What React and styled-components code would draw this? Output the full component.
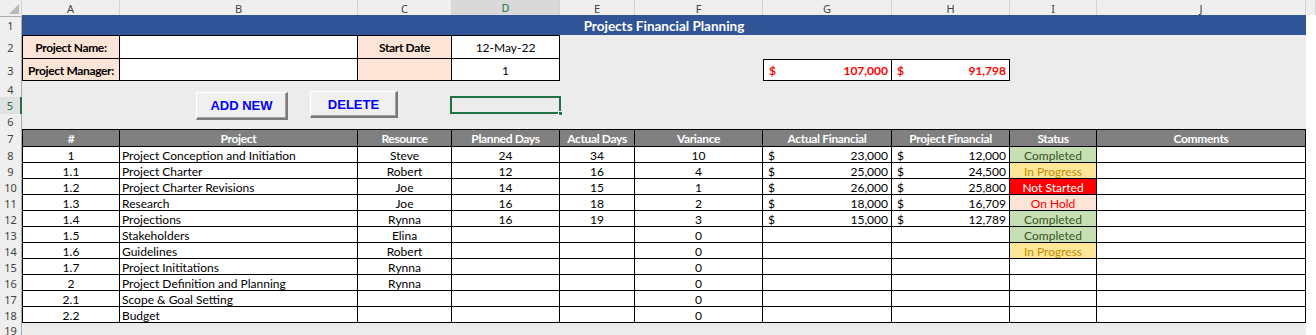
import React from 'react'
import styled, { createGlobalStyle, css } from 'styled-components'

const GlobalStyle = createGlobalStyle`
  html, body {
    margin: 0;
    padding: 0;
    background: #ffffff;
  }
  body {
    font-family: Lato, "Open Sans", sans-serif;
    overflow: hidden;
  }
`

const COLS = ['A', 'B', 'C', 'D', 'E', 'F', 'G', 'H', 'I', 'J']

const rows = [
  ['1', 'Project Conception and Initiation', 'Steve', '24', '34', '10', '23,000', '12,000', 'Completed'],
  ['1.1', 'Project Charter', 'Robert', '12', '16', '4', '25,000', '24,500', 'In Progress'],
  ['1.2', 'Project Charter Revisions', 'Joe', '14', '15', '1', '26,000', '25,800', 'Not Started'],
  ['1.3', 'Research', 'Joe', '16', '18', '2', '18,000', '16,709', 'On Hold'],
  ['1.4', 'Projections', 'Rynna', '16', '19', '3', '15,000', '12,789', 'Completed'],
  ['1.5', 'Stakeholders', 'Elina', '', '', '0', '', '', 'Completed'],
  ['1.6', 'Guidelines', 'Robert', '', '', '0', '', '', 'In Progress'],
  ['1.7', 'Project Inititations', 'Rynna', '', '', '0', '', '', ''],
  ['2', 'Project Definition and Planning', 'Rynna', '', '', '0', '', '', ''],
  ['2.1', 'Scope & Goal Setting', '', '', '', '0', '', '', ''],
  ['2.2', 'Budget', '', '', '', '0', '', '', ''],
]

const statusStyles = {
  'Completed': { bg: '#c6e0b4', color: '#375623' },
  'In Progress': { bg: '#ffe699', color: '#bf8f00' },
  'Not Started': { bg: '#ff0000', color: '#ffffff' },
  'On Hold': { bg: '#fce4d6', color: '#ff0000' },
}

const App = () => {
  return (
    <>
      <GlobalStyle />
      <Sheet>
        <Row $h={15}>
          <Corner />
          {COLS.map(c => (
            <ColHead key={c} $active={c === 'D'}>{c}</ColHead>
          ))}
          <ColHead />
        </Row>

        <Row $h={20}>
          <RowHead>1</RowHead>
          <Title $span={10}>Projects Financial Planning</Title>
          <Outside />
        </Row>

        <Row $h={24}>
          <RowHead>2</RowHead>
          <Cell $box $left $top $bg='#fce4d6' $bold>Project Name:</Cell>
          <Cell $box $top $bg='#fff' />
          <Cell $box $top $bg='#fce4d6' $bold>Start Date</Cell>
          <Cell $box $top $bg='#fff'>12-May-22</Cell>
          <Cell $span={6} />
          <Outside />
        </Row>

        <Row $h={22}>
          <RowHead>3</RowHead>
          <Cell $box $left $bg='#fce4d6' $bold>Project Manager:</Cell>
          <Cell $box $bg='#fff' />
          <Cell $box $bg='#fce4d6' />
          <Cell $box $bg='#fff'>1</Cell>
          <Cell $span={2} />
          <Money $box $left $top $red><span>$</span><span>107,000</span></Money>
          <Money $box $top $red><span>$</span><span>91,798</span></Money>
          <Cell $span={2} />
          <Outside />
        </Row>

        <Row $h={16}>
          <RowHead>4</RowHead>
          <Cell $span={10} />
          <Outside />
        </Row>

        <Row $h={17}>
          <RowHead $active>5</RowHead>
          <Cell $span={3} />
          <Selected />
          <Cell $span={6} />
          <Outside />
        </Row>

        <Row $h={15}>
          <RowHead>6</RowHead>
          <Cell $span={10} />
          <Outside />
        </Row>

        <Row $h={18}>
          <RowHead>7</RowHead>
          {['#', 'Project', 'Resource', 'Planned Days', 'Actual Days', 'Variance', 'Actual Financial', 'Project Financial', 'Status', 'Comments'].map((h, i) => (
            <HeadCell key={h} $box $top $left={i === 0} $bold>{h}</HeadCell>
          ))}
          <Outside />
        </Row>

        {rows.map((r, i) => {
          const st = statusStyles[r[8]]
          return (
            <Row $h={16} key={i}>
              <RowHead>{8 + i}</RowHead>
              <Cell $box $left $bg='#fff'>{r[0]}</Cell>
              <Cell $box $bg='#fff' $align='left'>{r[1]}</Cell>
              <Cell $box $bg='#fff'>{r[2]}</Cell>
              <Cell $box $bg='#fff'>{r[3]}</Cell>
              <Cell $box $bg='#fff'>{r[4]}</Cell>
              <Cell $box $bg='#fff'>{r[5]}</Cell>
              <Money $box>{r[6] && <><span>$</span><span>{r[6]}</span></>}</Money>
              <Money $box>{r[7] && <><span>$</span><span>{r[7]}</span></>}</Money>
              <Cell $box $bg={st ? st.bg : '#fff'} $color={st && st.color}>{r[8]}</Cell>
              <Cell $box $bg='#fff' />
              <Outside />
            </Row>
          )
        })}

        <Row $h={12}>
          <RowHead>19</RowHead>
          <Cell $span={10} />
          <Outside />
        </Row>

        <FormButton $left={196} $top={92} $w={92} $h={28}>ADD NEW</FormButton>
        <FormButton $left={310} $top={91} $w={88} $h={27}>DELETE</FormButton>
      </Sheet>
    </>
  )
}

const Sheet = styled.div`
  position: relative;
  display: grid;
  grid-template-columns: 22px 98px 238px 94px 108px 75px 128px 129px 118px 87px 209px 1fr;
  width: 1316px;
  height: 335px;
  overflow: hidden;
  background: #ececec;
`

const Row = styled.div`
  grid-column: 1 / -1;
  display: grid;
  grid-template-columns: subgrid;
  height: ${p => p.$h}px;
`

const Corner = styled.div`
  position: relative;
  background: #efefef;
  border-right: 1px solid #d4d4d4;
  border-bottom: 1px solid #ababab;
  box-sizing: border-box;
  &::after {
    content: '';
    position: absolute;
    right: 2px;
    bottom: 2px;
    border-left: 10px solid transparent;
    border-bottom: 10px solid #b9b9b9;
  }
`

const ColHead = styled.div`
  box-sizing: border-box;
  display: flex;
  align-items: center;
  justify-content: center;
  font-family: "Noto Sans", "Open Sans", sans-serif;
  font-size: 11px;
  color: #444;
  background: #efefef;
  border-right: 1px solid #d4d4d4;
  border-bottom: 1px solid #ababab;
  ${p => p.$active && css`
    background: #d9d9d9;
    color: #217346;
    border-bottom: 2px solid #217346;
  `}
`

const RowHead = styled.div`
  box-sizing: border-box;
  display: flex;
  align-items: center;
  justify-content: center;
  font-family: "Noto Sans", "Open Sans", sans-serif;
  font-size: 11px;
  color: #444;
  background: #efefef;
  border-right: 1px solid #ababab;
  ${p => p.$active && css`
    background: #e1e1e1;
    color: #217346;
    border-right: 2px solid #217346;
  `}
`

const Outside = styled.div`
  background: #ffffff;
`

const Cell = styled.div`
  box-sizing: border-box;
  display: flex;
  align-items: center;
  justify-content: ${p => (p.$align === 'left' ? 'flex-start' : 'center')};
  padding: 1px 2px 0;
  min-width: 0;
  overflow: hidden;
  white-space: nowrap;
  font-size: 12px;
  color: ${p => p.$color || '#000'};
  font-weight: ${p => (p.$bold ? 700 : 400)};
  letter-spacing: ${p => (p.$bold ? '-0.35px' : '0')};
  background: ${p => p.$bg || 'transparent'};
  ${p => p.$span && css`grid-column: span ${p.$span};`}
  ${p => p.$box && css`
    border-right: 1px solid #000;
    border-bottom: 1px solid #000;
  `}
  ${p => p.$left && css`border-left: 1px solid #000;`}
  ${p => p.$top && css`border-top: 1px solid #000;`}
`

const Title = styled(Cell)`
  background: #305496;
  color: #fff;
  font-weight: 700;
  font-size: 13.5px;
`

const HeadCell = styled(Cell)`
  background: #808080;
  color: #fff;
`

const Money = styled(Cell)`
  justify-content: space-between;
  padding: 1px 3px 0 5px;
  background: #fff;
  ${p => p.$red && css`
    color: #ff0000;
    font-weight: 700;
  `}
`

const Selected = styled.div`
  position: relative;
  &::before {
    content: '';
    position: absolute;
    left: -2px;
    top: -1px;
    right: -1px;
    bottom: 0;
    border: 2px solid #217346;
  }
  &::after {
    content: '';
    position: absolute;
    right: -3px;
    bottom: -2px;
    width: 5px;
    height: 5px;
    background: #217346;
    border: 1px solid #fff;
    box-sizing: border-box;
  }
`

const FormButton = styled.button`
  position: absolute;
  left: ${p => p.$left}px;
  top: ${p => p.$top}px;
  width: ${p => p.$w}px;
  height: ${p => p.$h}px;
  box-sizing: border-box;
  padding: 0;
  background: #f0f0f0;
  border-style: solid;
  border-width: 1px 2px 2px 1px;
  border-color: #ffffff #7a7a7a #7a7a7a #ffffff;
  box-shadow: inset -1px -1px 0 #a0a0a0;
  font-family: "Liberation Sans", Arial, sans-serif;
  font-size: 13px;
  font-weight: 700;
  color: #0000ff;
  cursor: pointer;
`

export default App
